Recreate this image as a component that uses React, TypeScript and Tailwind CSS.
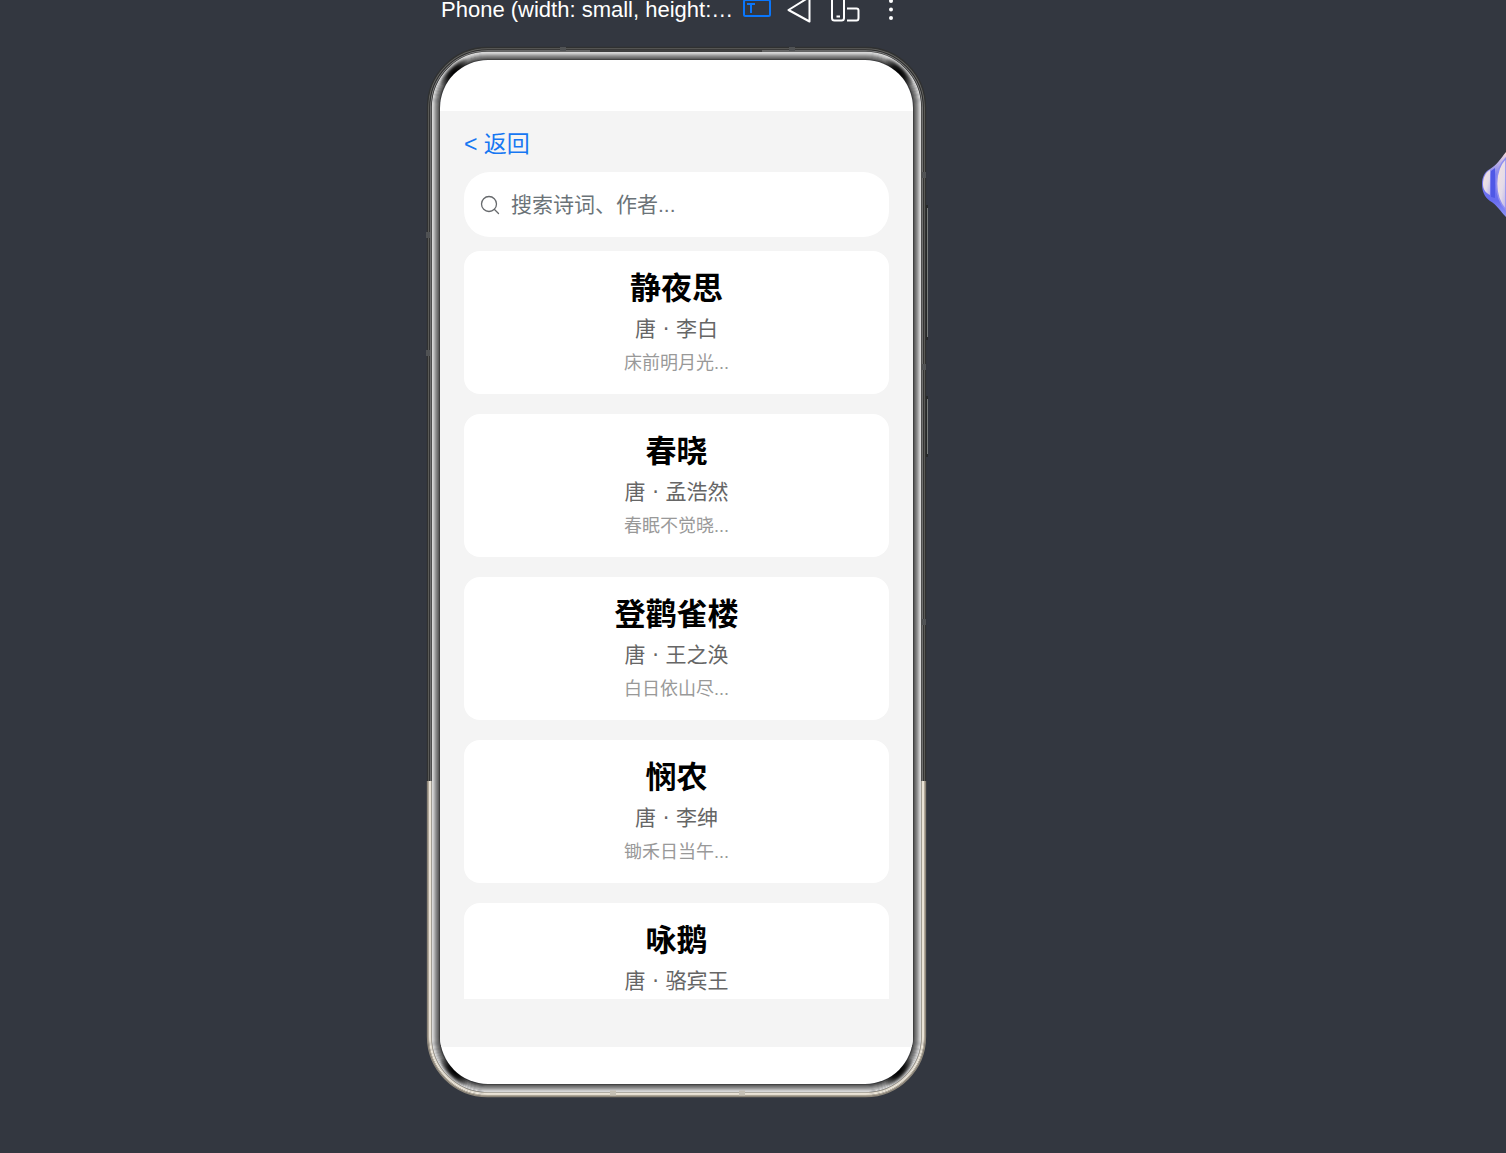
interface Poem {
  title: string;
  author: string;
  excerpt?: string;
}

const poems: Poem[] = [
  { title: '静夜思', author: '唐 · 李白', excerpt: '床前明月光...' },
  { title: '春晓', author: '唐 · 孟浩然', excerpt: '春眠不觉晓...' },
  { title: '登鹳雀楼', author: '唐 · 王之涣', excerpt: '白日依山尽...' },
  { title: '悯农', author: '唐 · 李绅', excerpt: '锄禾日当午...' },
  { title: '咏鹅', author: '唐 · 骆宾王' },
];

// Ring colours, from the glass outwards
const bezel = ['#3c3c3c', '#5c5c5c', '#707070', '#808080', '#949494', '#acacac', '#c4c4c4', '#d6d6d6'];
const darkRim = ['#2a2a2a', '#7c7c7c', '#2c2c2c', '#62625f', '#303131'];
const lightRim = ['#8a857b', '#e8e1d3', '#f3ede2', '#b9b0a1', '#8d867a'];

function Ring({ offset, color }: { offset: number; color: string }) {
  return (
    <rect
      x={12.5 - offset}
      y={11.5 - offset}
      width={474 + offset * 2}
      height={1025 + offset * 2}
      rx={48 + offset}
      fill="none"
      stroke={color}
      strokeWidth="1.3"
    />
  );
}

function PhoneFrame() {
  return (
    <svg
      className="pointer-events-none absolute inset-0 h-full w-full overflow-visible"
      viewBox="0 0 500 1049"
      preserveAspectRatio="none"
      aria-hidden="true"
    >
      <defs>
        <radialGradient id="corner">
          <stop offset="0" stopColor="#000" />
          <stop offset="0.4" stopColor="#000" stopOpacity="0.8" />
          <stop offset="1" stopColor="#000" stopOpacity="0" />
        </radialGradient>
        <clipPath id="upper">
          <rect x="-5" y="-5" width="510" height="738" />
        </clipPath>
        <clipPath id="lower">
          <rect x="-5" y="733" width="510" height="325" />
        </clipPath>
      </defs>
      {/* side buttons */}
      <path d="M500 157v135M500 348v61" stroke="#262829" strokeWidth="2" />
      <path d="M500.500 160v129M500.500 351v55" stroke="#777b7b" strokeWidth="1" />
      <g clipPath="url(#upper)">
        {darkRim.map((color, i) => (
          <Ring key={i} offset={i + 8} color={color} />
        ))}
      </g>
      <g clipPath="url(#lower)">
        {lightRim.map((color, i) => (
          <Ring key={i} offset={i + 8} color={color} />
        ))}
      </g>
      {bezel.map((color, i) => (
        <Ring key={i} offset={i} color={color} />
      ))}
      <g fill="url(#corner)">
        <ellipse cx="27" cy="24" rx="19" ry="7" transform="rotate(-45 27 24)" />
        <ellipse cx="472" cy="24" rx="19" ry="7" transform="rotate(45 472 24)" />
        <ellipse cx="27" cy="1024" rx="19" ry="7" transform="rotate(45 27 1024)" />
        <ellipse cx="472" cy="1024" rx="19" ry="7" transform="rotate(-45 472 1024)" />
      </g>
      {/* antenna breaks */}
      <path
        d="M133 1h6M362 1h6M1 184v6M1 302v6M497 124v6M497 316v6M497 571v6"
        stroke="#505254"
        strokeWidth="4"
      />
      <path d="M163 3h172" stroke="#171717" strokeWidth="1" />
      <path d="M183 1045h6M312 1045h6" stroke="#c5c0b5" strokeWidth="5" />
    </svg>
  );
}

function PreviewToolbar() {
  return (
    <header className="flex h-6 items-start pl-3.5 font-['Liberation_Sans',Arial,sans-serif] text-white">
      <h1 className="w-[302px] whitespace-nowrap text-[22px] leading-5">
        Phone (width: small, height:…
      </h1>
      <button type="button" aria-label="Text mode" className="mr-4">
        <svg width="28" height="24" viewBox="0 0 28 24" fill="none" stroke="#0a76fb" strokeWidth="2">
          <rect x="1" y="0" width="26" height="16" rx="1.500" />
          <path d="M4 4h8M8 4v9" />
        </svg>
      </button>
      <button type="button" aria-label="Back" className="mr-5">
        <svg width="24" height="24" viewBox="0 0 24 24" fill="none" stroke="#fff" strokeWidth="2">
          <path d="M22.500 -3 1.500 10l21 11.500Z" strokeLinejoin="round" />
        </svg>
      </button>
      <button type="button" aria-label="Fold" className="mr-[27px]">
        <svg width="29" height="24" viewBox="0 0 29 24" fill="none" stroke="#fff" strokeWidth="2">
          <path d="M1 -2v20q0 2.500 2.500 2.500h7q2.500 0 2.500-2.500V-2M5.500 16.500h3.500" />
          <path d="M16 8.500h9.500q2 0 2 2V18q0 2.500-2 2.500H16" />
        </svg>
      </button>
      <button type="button" aria-label="More">
        <svg width="8" height="24" viewBox="0 0 8 24" fill="#fff">
          <circle cx="4" cy="1" r="2" />
          <circle cx="4" cy="9.500" r="2" />
          <circle cx="4" cy="18" r="2" />
        </svg>
      </button>
    </header>
  );
}

function PoemCard({ poem }: { poem: Poem }) {
  return (
    <li className="shrink-0 rounded-2xl bg-white py-[18px] text-center">
      <h2 className="text-[31px] font-bold leading-10 text-black">{poem.title}</h2>
      <p className="mt-1.5 font-['DejaVu_Sans','Noto_Sans_CJK_SC',sans-serif] text-[21px] leading-7 text-[#666666]">
        {poem.author}
      </p>
      {poem.excerpt && (
        <p className="mt-[7px] text-[18px] leading-[26px] text-[#999999]">{poem.excerpt}</p>
      )}
    </li>
  );
}

function Assistant() {
  return (
    <button type="button" aria-label="Assistant" className="absolute right-0 top-[150px]">
      <svg width="24" height="68" viewBox="0 0 24 68">
        <defs>
          <linearGradient id="wing" x1="0" y1="0" x2="0" y2="1">
            <stop offset="0" stopColor="#f6dcdc" />
            <stop offset="0.35" stopColor="#7c7ff0" />
            <stop offset="0.75" stopColor="#666bf0" />
            <stop offset="1" stopColor="#8f95f5" />
          </linearGradient>
          <linearGradient id="face" x1="0" y1="0" x2="1" y2="1">
            <stop offset="0" stopColor="#f8e3dc" />
            <stop offset="0.6" stopColor="#e4dbe9" />
            <stop offset="1" stopColor="#b9b1ea" />
          </linearGradient>
        </defs>
        <path d="M24 2C19 8 15 15 8 19 2 22 0 28 0 34s2 13 8 17c7 4 10 10 16 16Z" fill="url(#wing)" />
        <path d="M8 20C3 23 1 28 1 34s3 9 7 11Z" fill="url(#face)" />
        <path d="M9 21v26l4 1V18Z" fill="#4f58e6" />
        <path d="M24 8c-12 12-13 38 0 52Z" fill="url(#face)" stroke="#8f8df0" strokeWidth="1.500" />
      </svg>
    </button>
  );
}

export default function App() {
  return (
    <div className="relative min-h-screen overflow-hidden bg-[#333740]">
      <div className="flex justify-center pr-[152px]">
        <div className="w-[500px]">
          <PreviewToolbar />

          <div className="relative mt-6 pb-[13px] pl-[13px] pr-3.5 pt-3">
            <PhoneFrame />
            <main className="relative overflow-hidden rounded-[48px] bg-white pb-[37px] pt-[51px] font-['Liberation_Sans','Noto_Sans_CJK_SC',sans-serif]">
              <div className="bg-[#f4f4f4] px-6 pb-12 pt-[18px]">
                <button type="button" className="block text-[23px] leading-[30px] text-[#1677f2]">
                  &lt; 返回
                </button>

                <label className="mt-[13px] flex h-[65px] items-center gap-[11px] rounded-[26px] bg-white px-4">
                  <svg
                    className="shrink-0"
                    width="20"
                    height="20"
                    viewBox="0 0 20 20"
                    fill="none"
                    stroke="#66696c"
                    strokeWidth="1.300"
                    strokeLinecap="round"
                  >
                    <circle cx="9" cy="9" r="7.500" />
                    <path d="m14.500 14.500 4 4" />
                  </svg>
                  <input
                    type="text"
                    aria-label="搜索诗词、作者"
                    placeholder="搜索诗词、作者..."
                    className="w-full bg-transparent text-[21px] leading-8 text-black outline-none placeholder:text-[#6b7378]"
                  />
                </label>

                <ul className="mt-3.5 flex h-[748px] flex-col gap-5 overflow-hidden">
                  {poems.map((poem) => (
                    <PoemCard key={poem.title} poem={poem} />
                  ))}
                </ul>
              </div>
            </main>
          </div>
        </div>
      </div>
      <Assistant />
    </div>
  );
}
